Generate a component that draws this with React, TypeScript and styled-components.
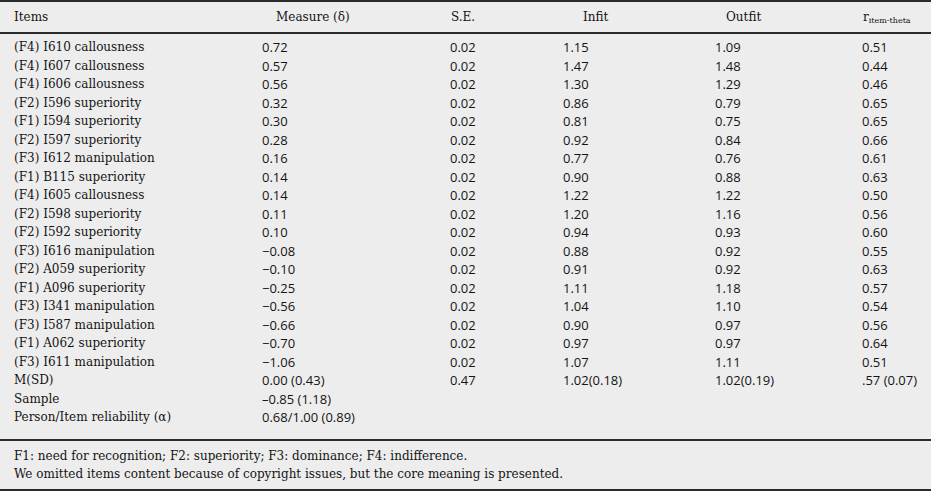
import React from 'react';
import styled, { createGlobalStyle } from 'styled-components';

type Row = [string, string, string, string, string, string];

const rows: Row[] = [
  ['(F4) I610 callousness', '0.72', '0.02', '1.15', '1.09', '0.51'],
  ['(F4) I607 callousness', '0.57', '0.02', '1.47', '1.48', '0.44'],
  ['(F4) I606 callousness', '0.56', '0.02', '1.30', '1.29', '0.46'],
  ['(F2) I596 superiority', '0.32', '0.02', '0.86', '0.79', '0.65'],
  ['(F1) I594 superiority', '0.30', '0.02', '0.81', '0.75', '0.65'],
  ['(F2) I597 superiority', '0.28', '0.02', '0.92', '0.84', '0.66'],
  ['(F3) I612 manipulation', '0.16', '0.02', '0.77', '0.76', '0.61'],
  ['(F1) B115 superiority', '0.14', '0.02', '0.90', '0.88', '0.63'],
  ['(F4) I605 callousness', '0.14', '0.02', '1.22', '1.22', '0.50'],
  ['(F2) I598 superiority', '0.11', '0.02', '1.20', '1.16', '0.56'],
  ['(F2) I592 superiority', '0.10', '0.02', '0.94', '0.93', '0.60'],
  ['(F3) I616 manipulation', '\u22120.08', '0.02', '0.88', '0.92', '0.55'],
  ['(F2) A059 superiority', '\u22120.10', '0.02', '0.91', '0.92', '0.63'],
  ['(F1) A096 superiority', '\u22120.25', '0.02', '1.11', '1.18', '0.57'],
  ['(F3) I341 manipulation', '\u22120.56', '0.02', '1.04', '1.10', '0.54'],
  ['(F3) I587 manipulation', '\u22120.66', '0.02', '0.90', '0.97', '0.56'],
  ['(F1) A062 superiority', '\u22120.70', '0.02', '0.97', '0.97', '0.64'],
  ['(F3) I611 manipulation', '\u22121.06', '0.02', '1.07', '1.11', '0.51'],
  ['M(SD)', '0.00 (0.43)', '0.47', '1.02(0.18)', '1.02(0.19)', '.57 (0.07)'],
  ['Sample', '\u20130.85 (1.18)', '', '', '', ''],
  ['Person/Item reliability (\u03b1)', '0.68/1.00 (0.89)', '', '', '', ''],
];

const GlobalStyle = createGlobalStyle`
  html, body {
    margin: 0;
    padding: 0;
    background: #fff;
  }
`;

const Table = styled.div`
  width: 931px;
  background: #ededed;
  color: #141414;
  border-top: 2px solid #2b2b2b;
  font-family: 'DejaVu Serif', serif;
`;

const Grid = styled.div`
  display: grid;
  grid-template-columns: 262px 188px 113px 152px 147px 1fr;
`;

const HeaderRow = styled(Grid)`
  height: 30px;
  align-items: center;
  border-bottom: 2px solid #2b2b2b;
`;

const HeadCell = styled.div<{ indent?: number }>`
  padding-left: ${(p) => p.indent ?? 0}px;
  font-size: 12px;
  white-space: nowrap;
`;

const Body = styled.div`
  padding: 4px 0 12px;
`;

const BodyRow = styled(Grid)`
  height: 18.5px;
  align-items: center;
`;

const ItemCell = styled.div`
  padding-left: 14px;
  font-size: 12px;
  white-space: nowrap;
`;

const NumCell = styled.div`
  font-family: 'Open Sans', sans-serif;
  font-size: 13px;
  white-space: nowrap;
`;

const Sub = styled.sub`
  font-size: 8px;
  vertical-align: -2px;
`;

const Footer = styled.div`
  border-top: 2px solid #2b2b2b;
  border-bottom: 2px solid #2b2b2b;
  padding: 6px 0 6px 14px;
  font-size: 12px;
  line-height: 18px;
`;

export default function App() {
  return (
    <>
      <GlobalStyle />
      <Table>
        <HeaderRow>
          <HeadCell indent={14}>Items</HeadCell>
          <HeadCell indent={14}>Measure (&#948;)</HeadCell>
          <HeadCell indent={1}>S.E.</HeadCell>
          <HeadCell indent={20}>Infit</HeadCell>
          <HeadCell indent={11}>Outfit</HeadCell>
          <HeadCell indent={1}>
            r<Sub>item-theta</Sub>
          </HeadCell>
        </HeaderRow>
        <Body>
          {rows.map((r) => (
            <BodyRow key={r[0]}>
              <ItemCell>{r[0]}</ItemCell>
              {r.slice(1).map((v, i) => (
                <NumCell key={i}>{v}</NumCell>
              ))}
            </BodyRow>
          ))}
        </Body>
        <Footer>
          <div>F1: need for recognition; F2: superiority; F3: dominance; F4: indifference.</div>
          <div>We omitted items content because of copyright issues, but the core meaning is presented.</div>
        </Footer>
      </Table>
    </>
  );
}
